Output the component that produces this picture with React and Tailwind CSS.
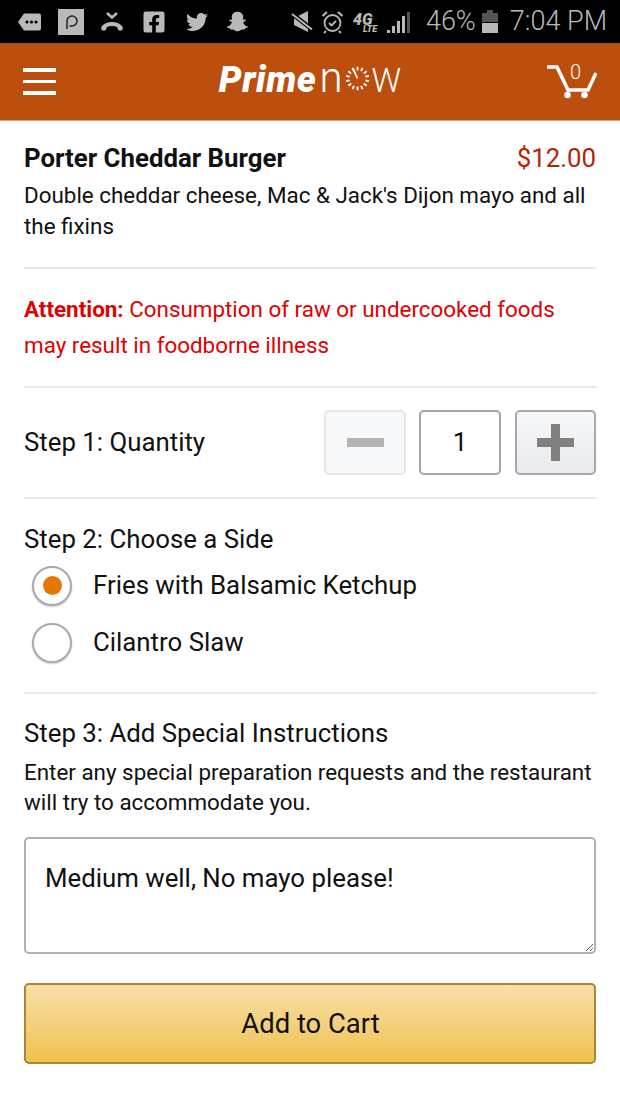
import React from "react";
import { FaFacebookSquare, FaTwitter, FaSnapchatGhost } from "react-icons/fa";

function StatusBar() {
  return (
    <div className="h-[43px] bg-black flex items-center text-[#b9b9b9] relative">
      <div className="flex items-center pl-[17px]">
        {/* message tag */}
        <svg width="25" height="20" viewBox="0 0 25 20" className="block">
          <path d="M7 1.500h15a2 2 0 0 1 2 2v13a2 2 0 0 1-2 2H7L1 10z" fill="#b9b9b9" />
          <circle cx="10" cy="10" r="1.600" fill="#000" />
          <circle cx="14.500" cy="10" r="1.600" fill="#000" />
          <circle cx="19" cy="10" r="1.600" fill="#000" />
        </svg>
        {/* pandora style tile */}
        <div className="ml-[16px] w-[26px] h-[26px] bg-[#b9b9b9] flex items-center justify-center">
          <svg width="14" height="18" viewBox="0 0 14 18">
            <path d="M3 16V8a5 5 0 1 1 5 5H5.500" fill="none" stroke="#222" strokeWidth="1.500" />
          </svg>
        </div>
        {/* missed call */}
        <svg width="24" height="22" viewBox="0 0 24 22" className="ml-[16px]">
          <path d="M7 2l5 4.500L17 2" fill="none" stroke="#b9b9b9" strokeWidth="2.600" />
          <path d="M1 17c3-8 19-8 22 0l-1 2.500h-3.500L17 16c-3-1.500-7-1.500-10 0l-1.500 3.500H2z" fill="#b9b9b9" />
        </svg>
        <FaFacebookSquare className="ml-[18px]" size={24} />
        <FaTwitter className="ml-[20px]" size={22} />
        <FaSnapchatGhost className="ml-[19px]" size={21} />
      </div>
      <div className="flex items-center ml-auto pr-[13px]">
        {/* muted */}
        <svg width="22" height="22" viewBox="0 0 22 22">
          <path d="M3 7L17 0v21L3 14z" fill="#b9b9b9" />
          <path d="M0 2l22 17" stroke="#000" strokeWidth="4.500" />
          <path d="M1 3l20 15.500" stroke="#b9b9b9" strokeWidth="2" />
        </svg>
        {/* alarm */}
        <svg width="23" height="24" viewBox="0 0 23 24" className="ml-[8px]" fill="none" stroke="#b9b9b9">
          <circle cx="11.500" cy="13" r="8" strokeWidth="1.800" />
          <path d="M8 13l2.500 2.500L15 11" strokeWidth="1.800" />
          <path d="M1.500 6L6 2M21.500 6L17 2" strokeWidth="2.200" />
          <path d="M5 21l-2 2M18 21l2 2" strokeWidth="1.800" />
        </svg>
        <div className="relative w-[26px] h-[24px] ml-[9px] font-['Roboto',sans-serif] font-black italic leading-none">
          <span className="absolute left-0 top-[2px] text-[16px]">4G</span>
          <span className="absolute left-[10px] top-[15px] text-[9px]">LTE</span>
        </div>
        <svg width="23" height="24" viewBox="0 0 23 24" className="ml-[8px]" fill="#b9b9b9">
          <rect x="0" y="20" width="3" height="3" />
          <rect x="5" y="16" width="3" height="7" />
          <rect x="10" y="11" width="3" height="12" />
          <rect x="15" y="6" width="3" height="17" />
          <rect x="20" y="2" width="3" height="21" fill="#555" />
        </svg>
        <span className="ml-[16px] text-[27px] leading-none font-['Roboto',sans-serif] font-light">46%</span>
        <svg width="16" height="24" viewBox="0 0 16 24" className="ml-[6px]">
          <rect x="5" y="0" width="6" height="3" fill="#555" />
          <rect x="0" y="3" width="16" height="9" fill="#555" />
          <rect x="0" y="13" width="16" height="10" fill="#b9b9b9" />
        </svg>
        <span className="ml-[12px] text-[27px] leading-none font-['Roboto',sans-serif] font-light">7:04 PM</span>
      </div>
    </div>
  );
}

function Header() {
  return (
    <div className="h-[78px] bg-[#bc4e0e] border-b border-[#e0a078] flex items-center px-[23px] relative">
      <div className="flex flex-col gap-[8px] w-[33px]">
        <div className="h-[3.500px] bg-white" />
        <div className="h-[3.500px] bg-white" />
        <div className="h-[3.500px] bg-white" />
      </div>
      <div className="flex-1 flex items-baseline justify-center text-white ml-[17px] mt-[-8px]">
        <span className="text-[36px] leading-none font-black italic font-['Roboto',sans-serif] tracking-[0.6px]">Prime</span>
        <span className="text-[42px] leading-none font-light font-['Roboto',sans-serif] ml-[3px]">n</span>
        {/* the o of the logo is a ring of dashes */}
        <svg width="27" height="27" viewBox="0 0 30 30" className="ml-[1px] mb-[-1px]">
          {Array.from({ length: 14 }).map((_, i) => (
            <rect key={i} x="14" y="2" width="2" height="4" fill="#fff" transform={`rotate(${i * 25.7} 15 15)`} />
          ))}
          <path d="M10 4l5 11" stroke="#fff" strokeWidth="2" />
        </svg>
        <span className="text-[33px] leading-none font-light font-['Roboto',sans-serif] ml-[1px]">W</span>
      </div>
      <div className="relative w-[50px] h-[36px]">
        <svg width="50" height="36" viewBox="0 0 50 36" fill="none" className="block">
          <path d="M0 3h10L21 26h20l8-17" stroke="#fff" strokeWidth="3.500" />
          <circle cx="20.500" cy="31" r="3.300" fill="#fff" />
          <circle cx="37.500" cy="31" r="3.300" fill="#fff" />
        </svg>
        <span className="absolute left-[23px] top-[-3px] text-white text-[20px] leading-[22px] font-['Roboto',sans-serif] font-light">0</span>
      </div>
    </div>
  );
}

function Divider() {
  return <div className="h-[2px] bg-[#e8e8e8]" />;
}

function Radio({ checked, label }) {
  return (
    <div className="flex items-center h-[57px] pl-[8px]">
      <div className="w-[40px] h-[40px] rounded-full border-2 border-[#aaaaaa] bg-white flex items-center justify-center shadow-[0_1px_2px_rgba(0,0,0,0.2)]">
        {checked && <div className="w-[19px] h-[19px] rounded-full bg-[#e77600]" />}
      </div>
      <span className="ml-[21px] text-[25.800px] text-[#111]">{label}</span>
    </div>
  );
}

export default function App() {
  return (
    <div className="w-[620px] h-[1102px] bg-white font-['Roboto',sans-serif] text-[#111] overflow-hidden">
      <StatusBar />
      <Header />
      <div className="px-[24px]">
        <div className="h-[146px] pt-[20px]">
          <div className="flex justify-between items-center h-[34px]">
            <span className="text-[25.800px] font-bold">Porter Cheddar Burger</span>
            <span className="text-[25.800px] text-[#b12704]">$12.00</span>
          </div>
          <p className="text-[22.400px] leading-[31px] mt-[5px]">Double cheddar cheese, Mac &amp; Jack's Dijon mayo and all the fixins</p>
        </div>
        <Divider />
        <div className="h-[117px] pt-[22px]">
          <p className="text-[22.400px] leading-[36px] text-[#e00000]">
            <span className="font-bold">Attention:</span> Consumption of raw or undercooked foods may result in foodborne illness
          </p>
        </div>
        <Divider />
        <div className="h-[109px] flex items-center">
          <span className="text-[25.800px] flex-1">Step 1: Quantity</span>
          <div className="w-[82px] h-[65px] rounded-[5px] border-2 border-[#e6e6e6] bg-[#f7f8fa] flex items-center justify-center">
            <div className="w-[37px] h-[9px] bg-[#b4b4b4]" />
          </div>
          <div className="w-[82px] h-[65px] rounded-[5px] border-2 border-[#a6a6a6] bg-white flex items-center justify-center ml-[13px] text-[26px]">1</div>
          <div className="w-[81px] h-[65px] rounded-[5px] border-2 border-[#a6a6ac] bg-gradient-to-b from-[#f7f8fa] to-[#e7e9ec] flex items-center justify-center ml-[14px] relative">
            <div className="w-[37px] h-[9px] bg-[#808080]" />
            <div className="absolute w-[9px] h-[37px] bg-[#808080]" />
          </div>
        </div>
        <Divider />
        <div className="h-[193px] pt-[24px]">
          <div className="text-[25.800px] leading-[32px]">Step 2: Choose a Side</div>
          <div className="mt-[2px]">
            <Radio checked label="Fries with Balsamic Ketchup" />
            <Radio label="Cilantro Slaw" />
          </div>
        </div>
        <Divider />
        <div className="pt-[23px]">
          <div className="text-[25.800px] leading-[32px]">Step 3: Add Special Instructions</div>
          <p className="text-[22.400px] leading-[30px] mt-[8px]">Enter any special preparation requests and the restaurant will try to accommodate you.</p>
          <textarea
            readOnly
            value="Medium well, No mayo please!"
            className="block w-full h-[117px] mt-[20px] border-2 border-[#b0b0b0] rounded-[5px] px-[19px] py-[23px] text-[25.800px] leading-[32px] text-[#111] outline-none"
          />
          <button className="block w-full h-[81px] mt-[29px] pt-[3px] pl-[1px] rounded-[5px] border-2 border-[#a88734] bg-gradient-to-b from-[#f7dfa5] to-[#f0c14b] text-[27.400px] text-[#111]">
            Add to Cart
          </button>
        </div>
      </div>
    </div>
  );
}
